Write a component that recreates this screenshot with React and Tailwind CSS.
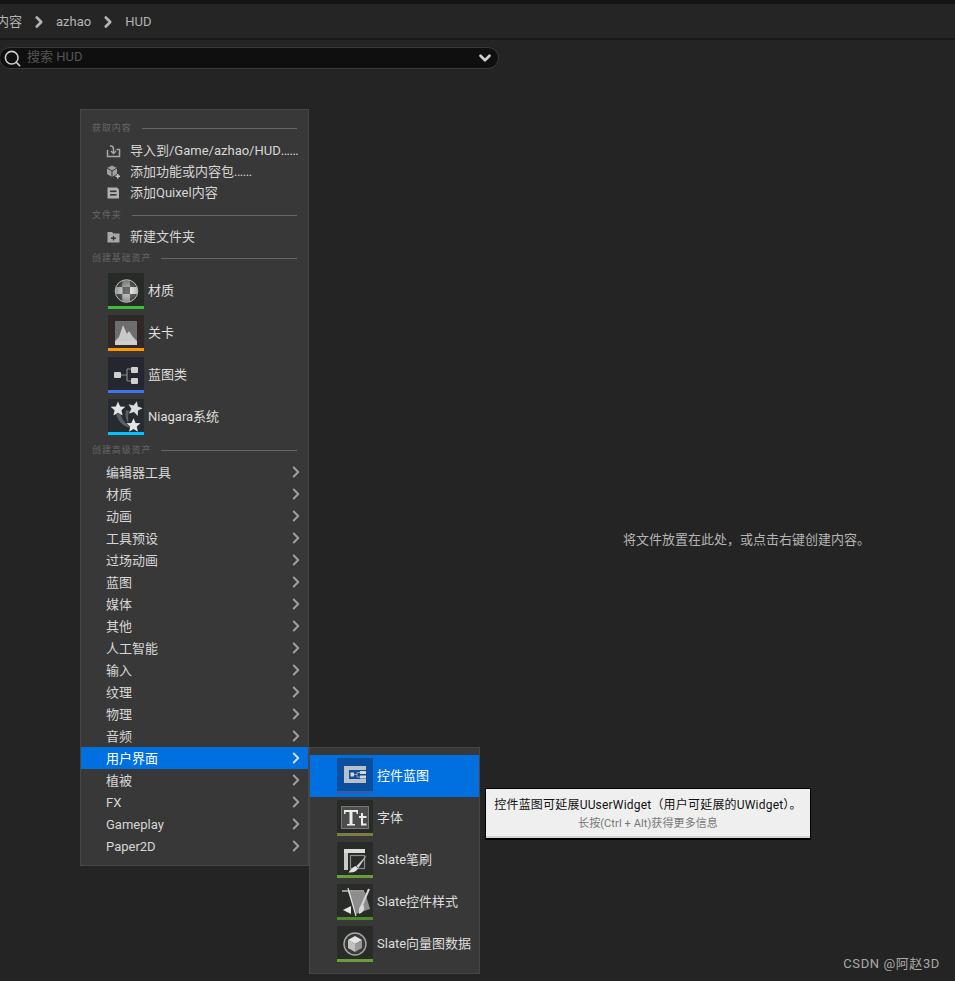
import { ChevronRight, ChevronDown, Search } from "lucide-react";

const FONT = "font-['Roboto','Noto_Sans_CJK_SC',sans-serif]";

const basicAssets = [
  { label: "材质", bg: "bg-[#262b28]", bar: "bg-[#3fbe3a]", icon: "material" },
  { label: "关卡", bg: "bg-[#2f2826]", bar: "bg-[#ff9800]", icon: "level" },
  { label: "蓝图类", bg: "bg-[#25272e]", bar: "bg-[#3f76f0]", icon: "blueprint" },
  { label: "Niagara系统", bg: "bg-[#252b2f]", bar: "bg-[#00c3ff]", icon: "niagara" },
];

const advancedAssets = [
  "编辑器工具",
  "材质",
  "动画",
  "工具预设",
  "过场动画",
  "蓝图",
  "媒体",
  "其他",
  "人工智能",
  "输入",
  "纹理",
  "物理",
  "音频",
  "用户界面",
  "植被",
  "FX",
  "Gameplay",
  "Paper2D",
];

const uiAssets = [
  { label: "控件蓝图", bg: "bg-[#0a4f9e]", bar: "bg-[#2f5fb4]", icon: "widget", active: true },
  { label: "字体", bg: "bg-[#282a27]", bar: "bg-[#7d7c45]", icon: "font" },
  { label: "Slate笔刷", bg: "bg-[#282b27]", bar: "bg-[#6b9c3c]", icon: "brush" },
  { label: "Slate控件样式", bg: "bg-[#282b27]", bar: "bg-[#4f8a2a]", icon: "style" },
  { label: "Slate向量图数据", bg: "bg-[#282b27]", bar: "bg-[#6b9c3c]", icon: "vector" },
];

function AssetGlyph({ name }) {
  if (name === "material") {
    return (
      <svg viewBox="0 0 36 36" className="w-9 h-9">
        <defs>
          <clipPath id="ball">
            <circle cx="18.5" cy="18" r="11" />
          </clipPath>
          <radialGradient id="shade" cx="0.55" cy="0.5" r="0.6">
            <stop offset="0" stopColor="#fff" stopOpacity="0.25" />
            <stop offset="1" stopColor="#000" stopOpacity="0.45" />
          </radialGradient>
        </defs>
        <g clipPath="url(#ball)">
          <rect x="6" y="6" width="25" height="25" fill="#d8d8d8" />
          <rect x="7" y="7" width="7.5" height="7" fill="#3a3a3a" />
          <rect x="22" y="7" width="7.5" height="7" fill="#3a3a3a" />
          <rect x="14.5" y="14" width="7.5" height="7" fill="#3f3f3f" />
          <rect x="7" y="21" width="7.5" height="8" fill="#3a3a3a" />
          <rect x="22" y="21" width="7.5" height="8" fill="#3a3a3a" />
          <rect x="14.5" y="7" width="7.5" height="7" fill="#9a9a9a" />
          <rect x="22" y="14" width="7.5" height="7" fill="#eeeeee" />
          <rect x="14.5" y="21" width="7.5" height="8" fill="#b5b5b5" />
          <rect x="6" y="6" width="25" height="25" fill="url(#shade)" />
        </g>
        <circle cx="18.5" cy="18" r="11.3" fill="none" stroke="#b8b8b8" strokeWidth="1" />
      </svg>
    );
  }
  if (name === "level") {
    return (
      <svg viewBox="0 0 36 36" className="w-9 h-9">
        <rect x="7" y="6" width="22" height="20" fill="#6d6d6d" />
        <path d="M7 26 L11 22 L15 10 L19 19 L21 16 L25 22 L29 26 Z" fill="#c8c8c8" />
        <rect x="7" y="26" width="22" height="4" fill="#cfcfcf" />
      </svg>
    );
  }
  if (name === "blueprint") {
    return (
      <svg viewBox="0 0 36 36" className="w-9 h-9">
        <path d="M13 18 H19 M19 12 V24 M19 12 H23 M19 24 H23" stroke="#8a8a8a" strokeWidth="1.2" fill="none" />
        <rect x="6" y="15" width="7" height="6" rx="1" fill="#cfcfcf" />
        <rect x="23" y="10" width="7" height="6" rx="1" fill="#cfcfcf" />
        <rect x="23" y="21" width="7" height="6" rx="1" fill="#cfcfcf" />
      </svg>
    );
  }
  if (name === "niagara") {
    const star = "M0 -6.5 L1.9 -2.2 L6.4 -2 L3 1 L4 5.6 L0 3.2 L-4 5.6 L-3 1 L-6.4 -2 L-1.9 -2.2 Z";
    return (
      <svg viewBox="0 0 36 36" className="w-9 h-9">
        <path d="M12 14 Q15 24 24 29 Q12 28 8 15 Z" fill="#5b6063" />
        <path d="M21 12 Q19 18 21 25 Q16 19 18 11 Z" fill="#5b6063" />
        <path d={star} transform="translate(10 10) scale(1.15)" fill="#e4e4e4" />
        <path d={star} transform="translate(27 9.5) rotate(15) scale(1.15)" fill="#dcdcdc" />
        <path d={star} transform="translate(25.5 26.5) scale(1.1)" fill="#e4e4e4" />
      </svg>
    );
  }
  if (name === "widget") {
    return (
      <svg viewBox="0 0 36 36" className="w-9 h-9">
        <rect x="7" y="8" width="5" height="17" fill="#b9c0ca" />
        <rect x="12" y="8" width="17" height="4" fill="#b9c0ca" />
        <rect x="12" y="21" width="17" height="4" fill="#b9c0ca" />
        <rect x="13.5" y="14.5" width="3.5" height="4" fill="#d5d5d5" />
        <path d="M17 16.5 H20 M20 14.5 V19 M20 14.5 H23 M20 19 H23" stroke="#9aa3ae" strokeWidth="1" fill="none" />
        <rect x="23" y="13" width="6" height="3" fill="#d5d5d5" />
        <rect x="23" y="17.5" width="6" height="3" fill="#d5d5d5" />
      </svg>
    );
  }
  if (name === "font") {
    return (
      <svg viewBox="0 0 36 36" className="w-9 h-9">
        <rect x="4.5" y="6.5" width="27" height="22" fill="#4c4c4c" stroke="#777" />
        <path d="M7 10 H21 V14 H19.5 V12 H15.5 V24 H18 V25.5 H10 V24 H12.5 V12 H8.5 V14 H7 Z" fill="#ececec" />
        <path d="M24 13 H26 V16 H29.5 V18 H26 V23.5 H29.5 V25.5 H24 V18 H22 V16 H24 Z" fill="#ececec" />
      </svg>
    );
  }
  if (name === "brush") {
    return (
      <svg viewBox="0 0 36 36" className="w-9 h-9">
        <rect x="7" y="7" width="21" height="4" fill="#dcdcdc" />
        <rect x="7" y="11" width="4" height="17" fill="#c9c9c9" />
        <rect x="13.5" y="13.5" width="14" height="13" fill="none" stroke="#8c8c8c" strokeWidth="1.2" />
        <path d="M30 13 L19.5 24 L21.5 26 Z" fill="#d0d0d0" />
        <path d="M19 24 Q15 25 11.5 30.5 Q19 31 21 26.5 Z" fill="#e2e2e2" />
      </svg>
    );
  }
  if (name === "style") {
    return (
      <svg viewBox="0 0 36 36" className="w-9 h-9">
        <path d="M11 8 L28 8 L33 25 L19 30 Z" fill="#8d8d8d" />
        <path d="M5 7 H27" stroke="#e2e2e2" strokeWidth="1.2" />
        <path d="M11 4 L19 32" stroke="#e2e2e2" strokeWidth="1.2" />
        <path d="M14 22 L6 26 L14 30 Z" fill="#e6e6e6" />
        <path d="M32 5 L25 21" stroke="#d5d5d5" strokeWidth="2" />
        <path d="M25 20 Q21 23 22 30 Q28 28 27 22 Z" fill="#d8d8d8" />
      </svg>
    );
  }
  return (
    <svg viewBox="0 0 36 36" className="w-9 h-9">
      <circle cx="18" cy="18" r="11" fill="#3a3a3a" stroke="#a8a8a8" strokeWidth="1.4" />
      <path d="M18 10 L25 14 L18 18 L11 14 Z" fill="#e6e6e6" />
      <path d="M11 14 L18 18 V26 L11 22 Z" fill="#c2c2c2" />
      <path d="M25 14 L18 18 V26 L25 22 Z" fill="#9a9a9a" />
    </svg>
  );
}

function SectionHeader({ title }) {
  return (
    <div className="flex items-center h-[14px] pl-[11px] pr-[11px] gap-[10px]">
      <span className="text-[9px] leading-none tracking-[0.9px] text-[#666666] whitespace-nowrap">{title}</span>
      <div className="h-px bg-[#666666] flex-1" />
    </div>
  );
}

function ActionRow({ icon, label, tall }) {
  return (
    <div className={`flex items-center pl-[25px] text-[13px] text-[#d6d6d6] whitespace-nowrap ${tall ? "h-[22px]" : "h-[21px]"}`}>
      <span className="w-[15px] h-[14px] mr-[9px] flex items-center justify-center">{icon}</span>
      {label}
    </div>
  );
}

function AssetTile({ item }) {
  return (
    <div className={`flex items-center h-[42px] pl-[27px] ${item.active ? "bg-[#0070e0] text-white" : "text-[#dedede]"}`}>
      <div className={`w-9 h-9 relative ${item.bg}`}>
        <AssetGlyph name={item.icon} />
        <div className={`absolute left-0 right-0 bottom-0 h-[3px] ${item.bar}`} />
      </div>
      <span className="ml-[4px] text-[13px] whitespace-nowrap">{item.label}</span>
    </div>
  );
}

function ContextMenu() {
  return (
    <div className="absolute left-[80px] top-[109px] w-[229px] h-[757px] bg-[#383838] border border-[#464646] pt-[11px]">
      <SectionHeader title="获取内容" />
      <div className="pt-[5px] pb-[5px]">
        <ActionRow
          label={
            <>
              导入到/Game/azhao/HUD<span className="tracking-[-0.5px]">......</span>
            </>
          }
          icon={
            <svg viewBox="0 0 15 14" className="w-[15px] h-[14px]" fill="none" stroke="#a8a8a8" strokeWidth="1.5">
              <path d="M1.5 6 V12.5 H13.5 V5.5 H10.5" />
              <path d="M4 2 C6.5 1.5 7.5 3 7.5 5.5 V9" />
              <path d="M5 7 L7.5 9.5 L10 7" />
            </svg>
          }
        />
        <ActionRow
          label={
            <>
              添加功能或内容包<span className="tracking-[-0.5px]">......</span>
            </>
          }
          icon={
            <svg viewBox="0 0 15 14" className="w-[15px] h-[14px]">
              <path d="M1 3 L6 .5 L11 3 V9 L6 12 L1 9 Z" fill="#a0a0a0" />
              <path d="M1 3 L6 6 L11 3 M6 6 V12" stroke="#383838" strokeWidth="1" fill="none" />
              <path d="M11 9 H12.5 V10.5 H14 V12 H12.5 V13.5 H11 V12 H9.5 V10.5 H11 Z" fill="#c4c4c4" />
            </svg>
          }
        />
        <ActionRow
          label="添加Quixel内容"
          icon={
            <svg viewBox="0 0 15 14" className="w-[15px] h-[14px]">
              <path d="M1.5 1.5 H11 L13 3.5 V12.5 H1.5 Z" fill="#b0b0b0" />
              <rect x="4" y="4.5" width="6.5" height="1.6" fill="#383838" />
              <rect x="4" y="8" width="6.5" height="1.6" fill="#383838" />
            </svg>
          }
        />
      </div>
      <SectionHeader title="文件夹" />
      <div className="pt-[4px] pb-[3px]">
        <ActionRow
          tall
          label="新建文件夹"
          icon={
            <svg viewBox="0 0 15 14" className="w-[15px] h-[14px]">
              <path d="M1.5 2 H6 L7.5 3.5 H13.5 V12.5 H1.5 Z" fill="#a8a8a8" />
              <path d="M6.8 6 H8.2 V7.6 H10 V9 H8.2 V10.6 H6.8 V9 H5 V7.6 H6.8 Z" fill="#383838" />
            </svg>
          }
        />
      </div>
      <SectionHeader title="创建基础资产" />
      <div className="pt-[5px] pb-[5px]">
        {basicAssets.map((item) => (
          <AssetTile key={item.label} item={item} />
        ))}
      </div>
      <SectionHeader title="创建高级资产" />
      <div className="pt-[4px]">
        {advancedAssets.map((label) => (
          <div
            key={label}
            className={`flex items-center justify-between h-[22px] pl-[25px] pr-[3px] text-[13px] ${
              label === "用户界面" ? "bg-[#0070e0] text-white" : "text-[#d6d6d6]"
            }`}
          >
            <span className="pt-px">{label}</span>
            <ChevronRight className={`w-[18px] h-[18px] ${label === "用户界面" ? "text-[#cfe3fa]" : "text-[#a0a0a0]"}`} strokeWidth={2.5} />
          </div>
        ))}
      </div>
    </div>
  );
}

function SubMenu() {
  return (
    <div className="absolute left-[309px] top-[747px] w-[171px] h-[227px] bg-[#383838] border border-[#464646] pt-[7px]">
      {uiAssets.map((item) => (
        <AssetTile key={item.label} item={item} />
      ))}
    </div>
  );
}

function HintTooltip() {
  return (
    <div className="absolute left-[485px] top-[788px] w-[326px] h-[52px] bg-[#efefef] border border-black border-b-[2px] shadow-[inset_0_-2px_0_#d4d4d4] flex flex-col items-center pt-[8px]">
      <div className="text-[12px] leading-[17px] tracking-[0.2px] text-[#111111] whitespace-nowrap">
        控件蓝图可延展UUserWidget（用户可延展的UWidget）。
      </div>
      <div className="mt-[2px] text-[11px] leading-[16px] tracking-[0.1px] text-[#777777] whitespace-nowrap">长按(Ctrl + Alt)获得更多信息</div>
    </div>
  );
}

export default function App() {
  return (
    <div className={`relative w-[955px] h-[981px] overflow-hidden bg-[#242424] ${FONT}`}>
      <div className="h-[4px] bg-[#141414]" />
      {/* breadcrumb */}
      <div className="h-[36px] flex items-center pt-px text-[13px] text-[#b4b4b4] border-b-2 border-[#1a1a1a] bg-[#252525]">
        <span className="-ml-[4px]">内容</span>
        <ChevronRight className="w-[18px] h-[18px] mx-[8px] text-[#b4b4b4]" strokeWidth={3.5} />
        <span>azhao</span>
        <ChevronRight className="w-[18px] h-[18px] mx-[8px] text-[#b4b4b4]" strokeWidth={3.5} />
        <span>HUD</span>
      </div>
      {/* search */}
      <div className="pt-[7px] -ml-px w-[500px]">
        <div className="h-[22px] rounded-full bg-[#0f0f0f] border border-[#3a3a3a] flex items-center pl-[3px] pr-[4px]">
          <Search className="w-[19px] h-[19px] text-[#cfcfcf]" strokeWidth={2} />
          <span className="ml-[5px] -mt-[2px] text-[13px] text-[#545454]">搜索 HUD</span>
          <ChevronDown className="w-[18px] h-[18px] ml-auto text-[#d0d0d0]" strokeWidth={3.5} />
        </div>
      </div>
      {/* empty state */}
      <div className="pl-[623px] pt-[462px] text-[13px] leading-[18px] text-[#b4b4b4] whitespace-nowrap">
        将文件放置在此处，或点击右键创建内容。
      </div>

      <ContextMenu />
      <SubMenu />
      <HintTooltip />
      <div className="absolute right-[15px] top-[955px] text-[13px] leading-[18px] tracking-[0.6px] text-[#a8a8a8]">CSDN @阿赵3D</div>
    </div>
  );
}
